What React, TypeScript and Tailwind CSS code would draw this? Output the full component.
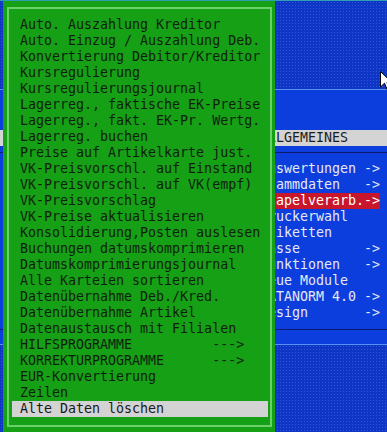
import React from 'react';

const greenItems = [
  'Auto. Auszahlung Kreditor',
  'Auto. Einzug / Auszahlung Deb.',
  'Konvertierung Debitor/Kreditor',
  'Kursregulierung',
  'Kursregulierungsjournal',
  'Lagerreg., faktische EK-Preise',
  'Lagerreg., fakt. EK-Pr. Wertg.',
  'Lagerreg. buchen',
  'Preise auf Artikelkarte just.',
  'VK-Preisvorschl. auf Einstand',
  'VK-Preisvorschl. auf VK(empf)',
  'VK-Preisvorschlag',
  'VK-Preise aktualisieren',
  'Konsolidierung,Posten auslesen',
  'Buchungen datumskomprimieren',
  'Datumskomprimierungsjournal',
  'Alle Karteien sortieren',
  'Datenübernahme Deb./Kred.',
  'Datenübernahme Artikel',
  'Datenaustausch mit Filialen',
  'HILFSPROGRAMME          --->',
  'KORREKTURPROGRAMME      --->',
  'EUR-Konvertierung',
  'Zeilen',
  'Alte Daten löschen',
];

const blueItems = [
  'Auswertungen ->',
  'Stammdaten   ->',
  'Stapelverarb.->',
  'Druckerwahl',
  'Etiketten',
  'Kasse        ->',
  'Funktionen   ->',
  'Neue Module',
  'DATANORM 4.0 ->',
  'Design       ->',
];

const selectedGreen = greenItems.length - 1;
const selectedBlue = 2;

const pattern =
  'bg-[#0f35c4] bg-[radial-gradient(#2f57e6_0.8px,transparent_0.9px)] bg-[length:3px_3px]';

export default function App() {
  return (
    <div className="relative w-[387px] h-[432px] overflow-hidden bg-[#0c3ddd] font-['DejaVu_Sans_Mono',monospace] text-[13.3px] leading-[16px]">
      {/* desktop + main menu underneath */}
      <div className="flex flex-col h-full">
        <div className="h-px bg-[#2c9fb3]" />
        <div className={`h-[88px] ${pattern}`} />
        <div className="h-px bg-[#5a92f2]" />
        <div className="h-[40px]" />
        <div className="h-[16px] bg-[#d4d4d4] pl-[260px] text-[#1c1c1c] whitespace-pre">ALLGEMEINES</div>
        <div className="h-[15px] pt-[6px]">
          <div className="h-px bg-[#0a1a6e]" />
        </div>
        <div className="flex flex-col pl-[260px]">
          {blueItems.map((item, i) => (
            <div
              key={item}
              className={`h-[16px] w-[120px] whitespace-pre ${
                i === selectedBlue ? 'bg-[#c8162a] text-white' : 'text-[#e6e8f2]'
              }`}
            >
              {item}
            </div>
          ))}
        </div>
        <div className="h-[8px]" />
        <div className="h-px bg-[#0a1a6e]" />
        <div className="h-[14px]" />
        <div className="h-px bg-[#5a92f2]" />
        <div className={`flex-1 ${pattern}`} />
      </div>

      {/* green popup menu */}
      <div className="absolute left-[3px] top-[1px] w-[272px] h-[431px] bg-[#16a016] pt-[6px] pl-[4px] pr-[3px] pb-[5px]">
        <div className="h-full border-2 border-[#6ad06a] pt-[8px] pl-[3px]">
          {greenItems.map((item, i) => (
            <div
              key={item}
              className={`h-[16px] w-[256px] pl-[8px] whitespace-pre ${
                i === selectedGreen ? 'bg-[#d3d3d3] text-[#1a1a1a]' : 'text-[#0f1f0f]'
              }`}
            >
              {item}
            </div>
          ))}
        </div>
      </div>

      {/* mouse pointer */}
      <svg className="absolute left-[380px] top-[71px]" width="13" height="20" viewBox="0 0 13 20">
        <path
          d="M0.5 0.5 L0.5 16 L4.5 12.2 L7.3 18.8 L9.6 17.8 L6.9 11.5 L12 11.5 Z"
          fill="#ffffff"
          stroke="#000000"
          strokeWidth="1"
        />
      </svg>
    </div>
  );
}
